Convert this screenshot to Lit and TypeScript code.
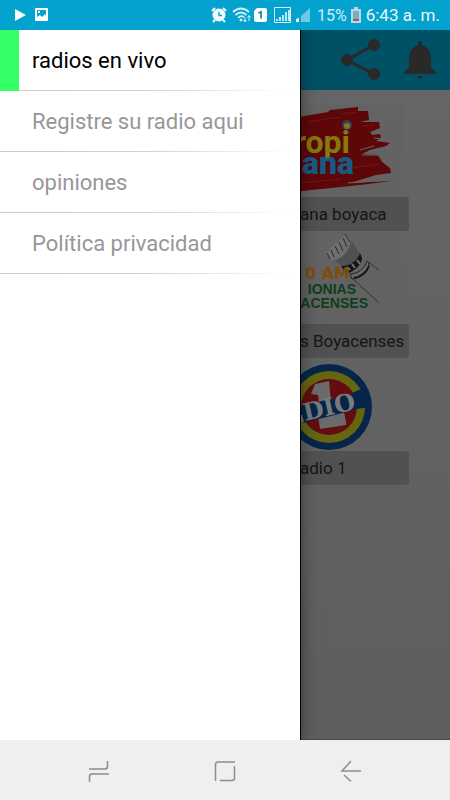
import { LitElement, html, css, svg } from "lit";
import { customElement, state } from "lit/decorators.js";
import { classMap } from "lit/directives/class-map.js";

const tropicanaLogo = svg`
  <path d="M-2 13L28 8L30 6L58 3L58 7L68 7L69 16L60 18L79 18L80 24L70 28L72 31L80 30L81 34L76 37L90 39L86 42L70 46L62 50L78 51L82 58L90 64L91 69L76 71L50 79L92 77L60 81L2 87L-2 87Z" fill="#5d0708"/>
  <path d="M8 18L40 13M42 10L56 8M0 79L40 75M52 64L80 60M62 22L74 21" stroke="#701719" stroke-width="1" fill="none"/>
  <path d="M62 51L79 51M60 46L74 42M74 34L84 35M48 79L88 76" stroke="#666" stroke-width="1"/>
  <circle cx="47" cy="21" r="5" fill="#333b66"/>
  <circle cx="47" cy="22" r="3" fill="#85780f"/>
  <text class="yellow" x="50" y="49" text-anchor="end">ropi</text>
  <text class="blue" x="54" y="70" text-anchor="end">ana</text>`;

const armoniasLogo = svg`
  <path d="M25 22L46 2L50 8L61 24L60 31L51 41L41 35Z" fill="#505050"/>
  <path d="M25 22L46 2L51 9C50 20 42 28 32 30Z" fill="#6e6e6e"/>
  <path d="M27 22L30 28M31 19L34 26M35 15L39 23M39 11L43 20M43 7L47 16M45 3L50 11" stroke="#292929" stroke-width="1"/>
  <path d="M41 35C50 36 58 29 60 22L62 27C62 34 53 42 46 42Z" fill="#151515"/>
  <path d="M47 36l3 3M52 33l3 4M57 29l3 4" stroke="#777" stroke-width="2"/>
  <path d="M50 43C58 43 65 37 67 30L69 32C69 40 60 47 52 48Z" fill="#686868" stroke="#222" stroke-width="1"/>
  <path d="M54 47C61 46 67 41 69 35" stroke="#181818" stroke-width="2" fill="none"/>
  <path d="M67 30L79 39M52 47L79 72" stroke="#333" stroke-width="1"/>
  <text class="orange" x="50" y="48" text-anchor="end">0 AM</text>
  <text class="green" x="56" y="63" text-anchor="end">IONIAS</text>
  <text class="green" x="68" y="77" text-anchor="end">ACENSES</text>`;

const radioUnoLogo = svg`
  <circle cx="29" cy="49" r="43" fill="#05264a"/>
  <circle cx="29" cy="49" r="36" fill="#666510"/>
  <circle cx="29" cy="49" r="28" fill="#620d10"/>
  <path d="M59 32L68 31L70 44L64 50L54 51L52 35Z" fill="#05264a"/>
  <path d="M11 36L15 26L29 23L31 44L19 46L18 37Z" fill="#6b6b6b"/>
  <path d="M18 58L33 54L44 54L46 64L46 67L20 71Z" fill="#6b6b6b"/>
  <path d="M-2 49L22 43L33 41L58 34L60 50L35 57L-2 66Z" fill="#05264a"/>
  <text class="dio" x="5" y="63" transform="rotate(-13 5 63)">DIO</text>
  <path d="M0 57L2 57L4 64L0 65Z" fill="#777"/>`;

@customElement("app-root")
export class AppRoot extends LitElement {
  @state() private selected = 0;

  private entries = ["radios en vivo", "Registre su radio aqui", "opiniones", "Política privacidad"];
  private stations = [
    { name: "ana boyaca", logo: tropicanaLogo },
    { name: "s Boyacenses", logo: armoniasLogo },
    { name: "adio 1", logo: radioUnoLogo },
  ];

  static styles = css`
    :host {
      display: flex;
      flex-direction: column;
      min-height: 100vh;
      font-family: Roboto, "Liberation Sans", sans-serif;
      background: #fff;
    }
    * { box-sizing: border-box; }
    svg { display: block; flex: none; }
    button {
      border: 0;
      padding: 0;
      background: none;
      cursor: pointer;
    }
    .status {
      position: relative;
      z-index: 2;
      height: 30px;
      display: flex;
      align-items: center;
      padding: 0 10px 0 14px;
      background: #03a2cf;
      color: #e8f8fc;
    }
    .status .spacer { flex: 1; }
    .percent { font-size: 16px; margin: 0 4px 0 6px; color: #d0eef7; }
    .time { font-size: 17px; margin-left: 5px; white-space: nowrap; }
    .body { flex: 1; display: flex; }
    .drawer {
      position: relative;
      z-index: 1;
      flex: 2;
      min-width: 0;
      background: #fff;
      box-shadow: 1px 0 #000, 0 0 16px rgba(0, 0, 0, 0.5);
    }
    .entry {
      display: flex;
      align-items: center;
      height: 61px;
      padding-left: 32px;
      font-size: 22px;
      color: #979797;
      text-decoration: none;
      background: linear-gradient(90deg, #ccc, #d2d2d2 50%, #fff 97%) bottom / 100% 1px no-repeat;
    }
    .entry.active {
      color: #000;
      background:
        linear-gradient(#33ff66, #33ff66) left / 19px 100% no-repeat,
        linear-gradient(90deg, #ccc, #d2d2d2 50%, #fff 97%) bottom / 100% 1px no-repeat;
    }
    .page {
      flex: 1;
      min-width: 0;
      border-bottom: 1px solid #484848;
      background: linear-gradient(#666, #5e5e5e);
    }
    .bar {
      height: 60px;
      display: flex;
      align-items: center;
      justify-content: flex-end;
      gap: 20px;
      padding-right: 12px;
      background: #005166;
    }
    .stations {
      margin: 0;
      padding: 14px 41px 0 0;
      list-style: none;
    }
    .station svg { width: 100%; height: 93px; }
    .caption {
      height: 34px;
      display: flex;
      align-items: center;
      border-radius: 0 3px 3px 0;
      background: #515151;
      color: #141414;
      font-size: 17px;
      white-space: nowrap;
    }
    text { font-family: Roboto, "Liberation Sans", sans-serif; font-weight: 900; }
    .yellow { font-size: 32px; fill: #85780f; font-weight: 700; }
    .blue { font-size: 32px; fill: #165b86; }
    .orange { font: bold 16px "DejaVu Sans", sans-serif; fill: #7d4d0c; }
    .green { font: bold 14px "Liberation Sans", sans-serif; fill: #0c3f1b; }
    .dio { font: bold 24px "DejaVu Serif", serif; fill: #7a7a7a; }
    .keys {
      position: relative;
      z-index: 2;
      height: 60px;
      display: flex;
      align-items: center;
      justify-content: center;
      gap: 102px;
      background: #efefef;
    }
  `;

  render() {
    return html`
      <header class="status">
        <svg width="34" height="16" viewBox="0 0 34 16" fill="#fff">
          <path d="M1 2L12 8L1 14Z"/>
          <path fill-rule="evenodd" d="M22 1H33Q34 1 34 2V13Q34 14 33 14H22Q21 14 21 13V2Q21 1 22 1ZM23 3V10L26 8L28 10L31 7L32 9V3ZM24 4h2v2h-2z"/>
        </svg>
        <span class="spacer"></span>
        <svg width="100" height="18" viewBox="0 0 100 18" fill="none">
          <circle cx="8" cy="9" r="6.500" fill="#f2fbfd"/>
          <path d="M1 5L4 2M12 2L15 5M4 14L2 16M12 14L14 16" stroke="#f2fbfd" stroke-width="2"/>
          <path d="M8 6V9.5H11" stroke="#03a2cf" stroke-width="1.3"/>
          <path d="M22 6Q30 -1 38 6M24.500 9Q30 4 35.500 9M27 12Q30 9 33 11" stroke="#d9f3fa" stroke-width="1.7"/>
          <circle cx="30" cy="14" r="1.400" fill="#d9f3fa"/>
          <path d="M34 11V15M32.500 14L34 16L35.500 14M38 15V10M36.500 11.500L38 9.500L39.500 11.500" stroke="#d9f3fa"/>
          <path d="M46 2H54Q56 2 56 4V14Q56 16 54 16H45Q43 16 43 14V5Z" fill="#fff"/>
          <path d="M47.500 7L50 5.800V12.500" stroke="#0487ac" stroke-width="1.700"/>
          <path d="M63.500 1.500H79.500V16.500H63.500Z" stroke="#d9f3fa"/>
          <path d="M66 15V13M69 15V11M72 15V9M75 15V6M78 15V4" stroke="#d9f3fa" stroke-width="1.800"/>
          <path d="M85 16V13L88 12V16Z" fill="#fff"/>
          <path d="M90 16V10L99 2V16Z" fill="#6ec9e3"/>
        </svg>
        <span class="percent">15%</span>
        <svg width="10" height="16" viewBox="0 0 10 16">
          <path d="M3 0H7V2H10V16H0V2H3Z" fill="#b7d9df"/>
          <path d="M2 4H8V12H2Z" fill="#7aaebb"/>
          <path d="M2 12H8V14H2Z" fill="#b5525a"/>
        </svg>
        <span class="time">6:43 a. m.</span>
      </header>
      <div class="body">
        <nav class="drawer">
          ${this.entries.map((label, i) => html`
            <a href="#" class=${classMap({ entry: true, active: i === this.selected })}
              @click=${() => (this.selected = i)}>${label}</a>`)}
        </nav>
        <main class="page">
          <div class="bar">
            <button aria-label="Compartir">
              <svg width="42" height="42" viewBox="0 0 42 42" fill="#292929">
                <path d="M34 6L7 21L34 35" fill="none" stroke="#292929" stroke-width="3"/>
                <circle cx="34" cy="6" r="6"/><circle cx="7" cy="21" r="6"/><circle cx="34" cy="35" r="6"/>
              </svg>
            </button>
            <button aria-label="Notificaciones">
              <svg width="36" height="40" viewBox="0 0 36 40" fill="#292929">
                <path d="M16 4Q16 1 18 1Q20 1 20 4V5Q29 8 29 18V28L34 32V34H2V32L7 28V18Q7 8 16 5Z"/>
                <path d="M15 36H21Q20 39 18 39Q16 39 15 36Z"/>
              </svg>
            </button>
          </div>
          <ul class="stations">
            ${this.stations.map((s) => html`
              <li class="station">
                <svg viewBox="0 0 109 93" preserveAspectRatio="xMinYMid meet">
                  <path d="M0 0H103V93H0Z" fill="#636363" fill-opacity="0.6"/>
                  ${s.logo}
                </svg>
                <div class="caption">${s.name}</div>
              </li>`)}
          </ul>
        </main>
      </div>
      <footer class="keys">
        <button aria-label="Recientes">
          <svg width="24" height="24" viewBox="0 0 24 24" fill="none" stroke="#8d8d8d" stroke-width="1.500">
            <path d="M2 11H18Q20.500 11 20.500 8.500V3M22 16H5Q2.500 16 2.500 18.500V24"/>
          </svg>
        </button>
        <button aria-label="Inicio">
          <svg width="24" height="24" viewBox="0 0 24 24" fill="none" stroke="#8d8d8d" stroke-width="1.500">
            <path d="M22 4H5Q2.500 4 2.500 6.500V23M21.500 8V20Q21.500 22.500 19 22.500H7"/>
          </svg>
        </button>
        <button aria-label="Atrás">
          <svg width="24" height="24" viewBox="0 0 24 24" fill="none" stroke="#8d8d8d" stroke-width="1.500">
            <path d="M12 3L3 13H22M5 17L12 23.500"/>
          </svg>
        </button>
      </footer>
    `;
  }
}
